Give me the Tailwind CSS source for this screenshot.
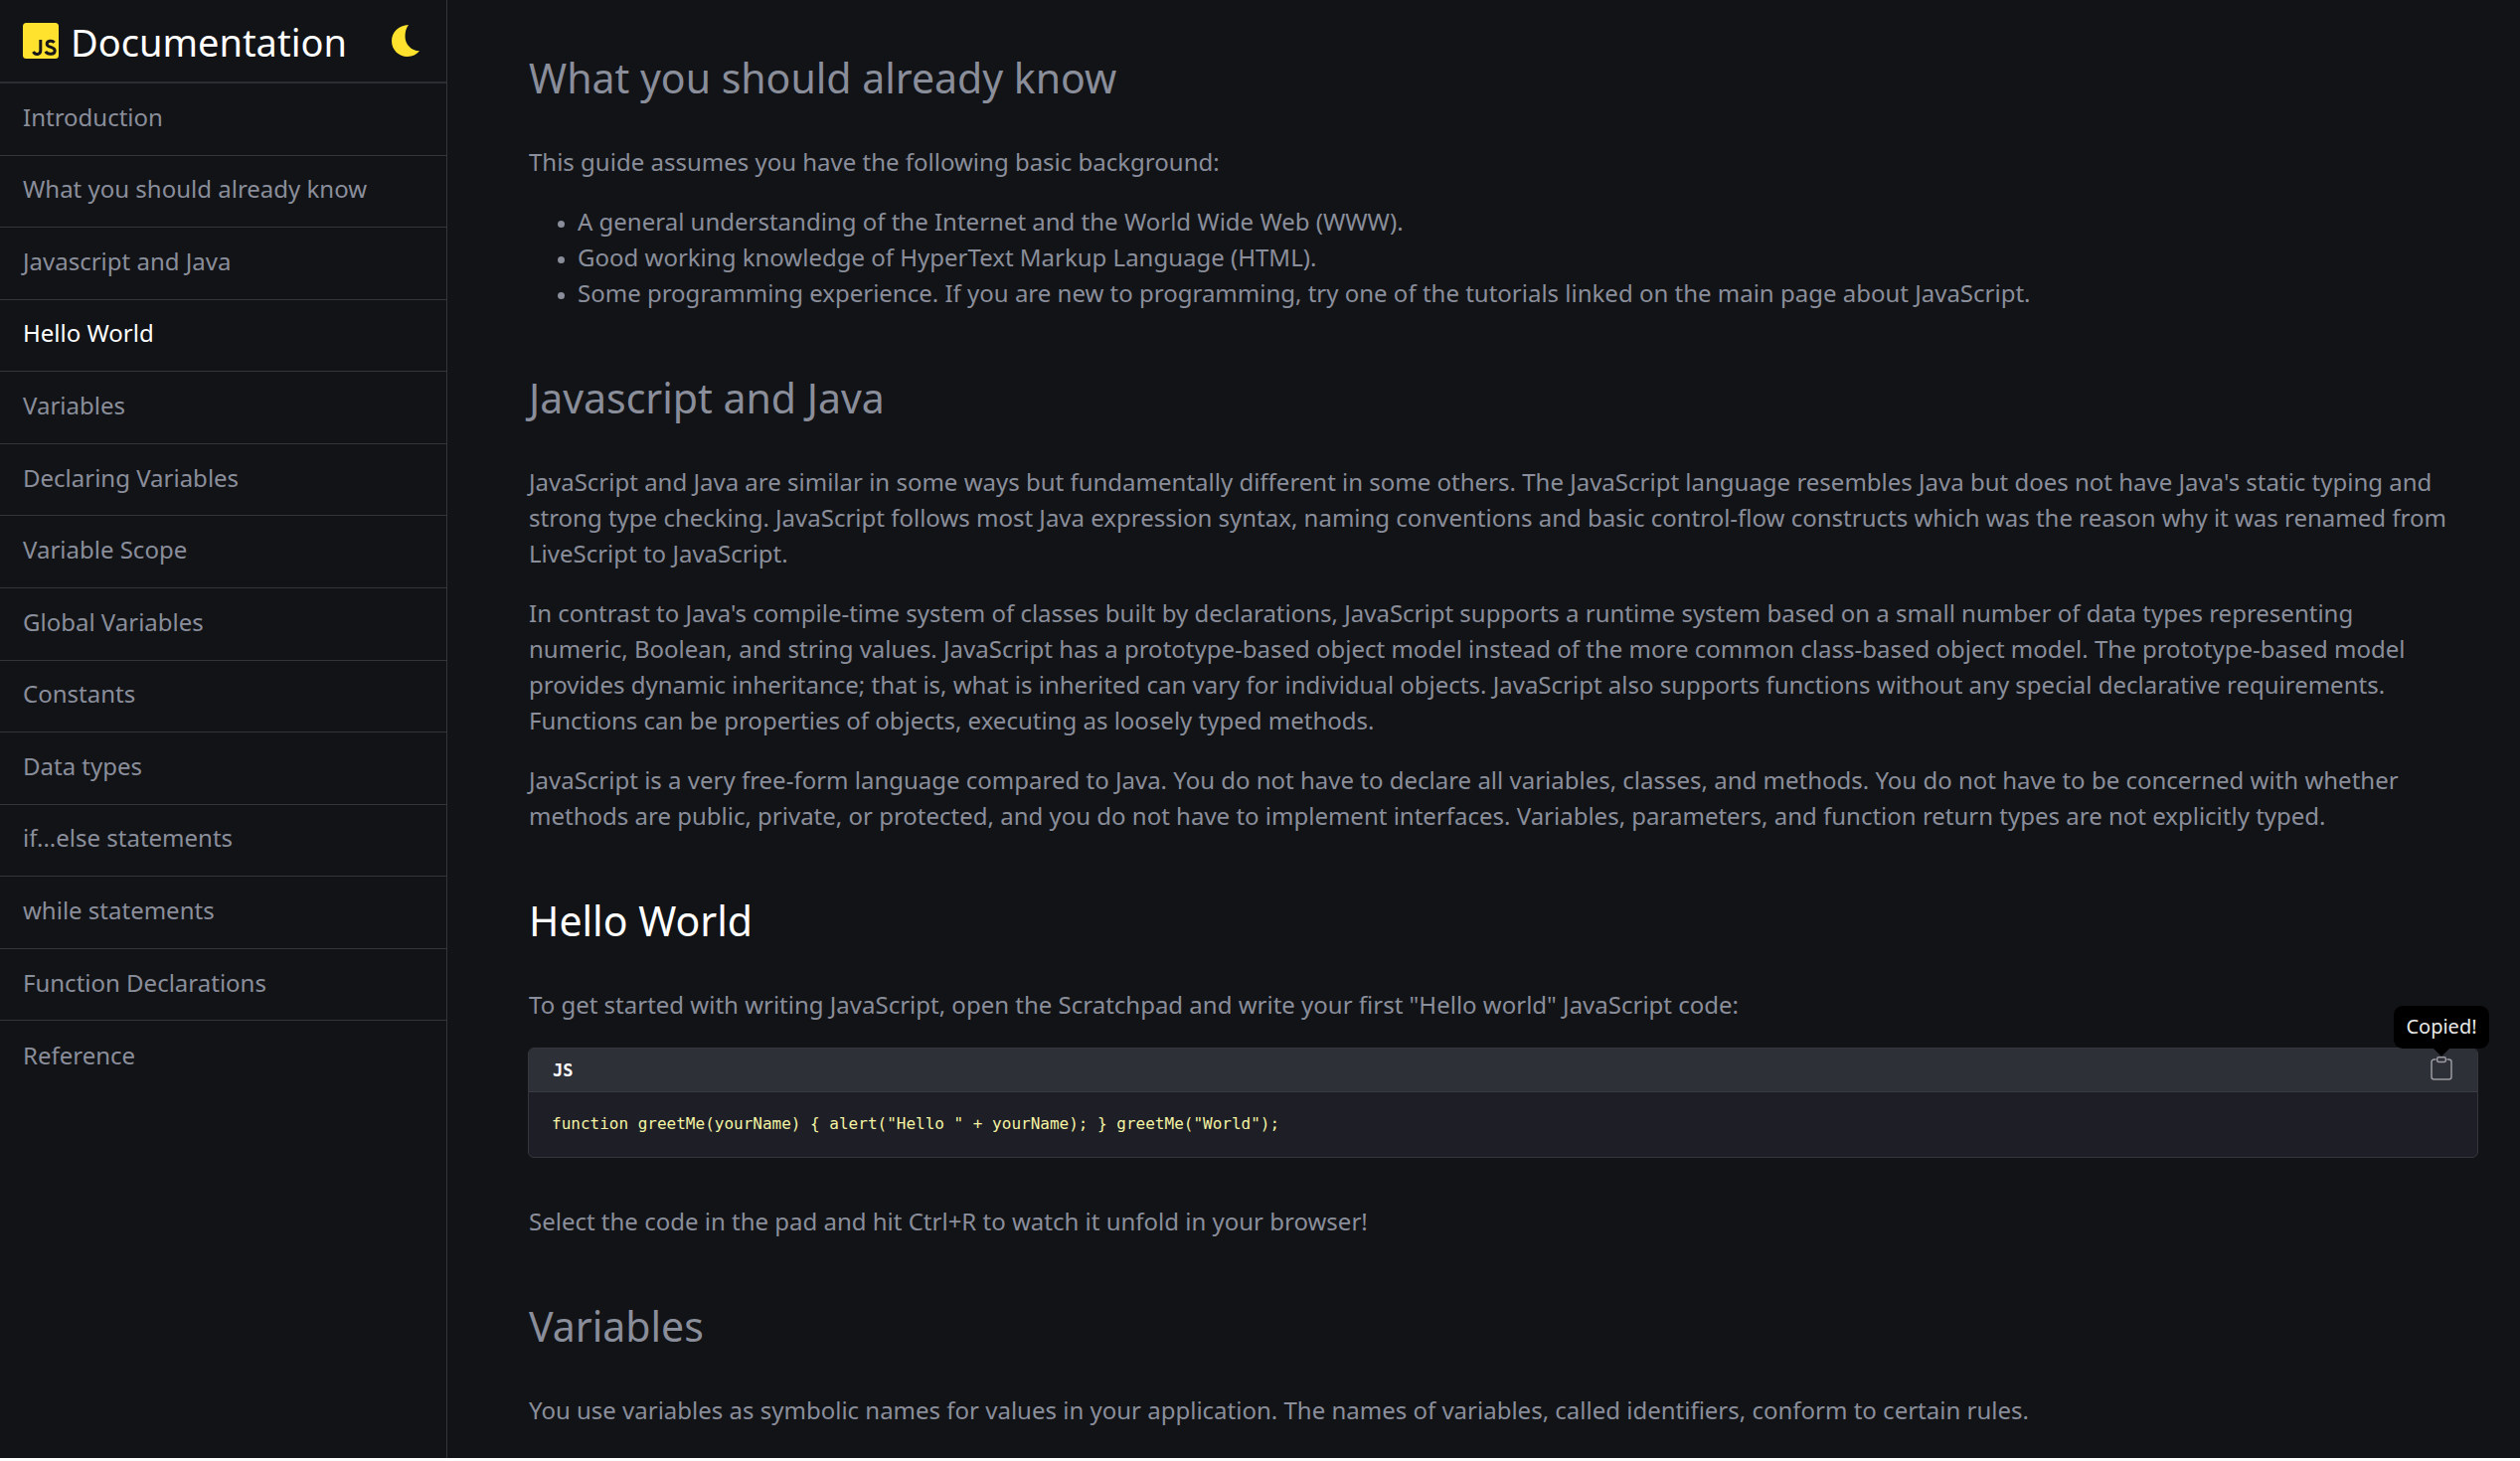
<!DOCTYPE html>
<html lang="en">
<head>
<meta charset="utf-8">
<meta name="viewport" content="width=device-width, initial-scale=1">
<title>JS Documentation</title>
<script src="https://cdn.jsdelivr.net/npm/@tailwindcss/browser@4"></script>
</head>
<body class="flex h-screen overflow-hidden bg-white pb-[3px] font-['Noto_Sans',sans-serif] text-[24px] leading-[36px] text-[#8a8e9b]">

  <!-- Sidebar -->
  <nav class="w-[450px] shrink-0 overflow-hidden border-r border-[#34353b] bg-[#121316]" aria-label="Documentation">
    <header class="flex h-[84px] items-center border-b-2 border-[#2c2d33] pr-[25px] pl-[23px]">
      <svg class="h-9 w-9 shrink-0" viewBox="0 0 36 36" aria-hidden="true">
        <rect width="36" height="36" rx="3.5" fill="#ffe22e"/>
        <path d="M17.800 17v10.800c0 4.200-5.200 5-7.300 1.200" fill="none" stroke="#17171a" stroke-width="3"/>
        <path d="M31.600 19.800c-1.700-2.400-7.400-2.300-7.400 1.400 0 4 8 2.400 8 6.700 0 4.200-7.200 4.500-9.400.9" fill="none" stroke="#17171a" stroke-width="3"/>
      </svg>
      <h1 class="ml-3 pt-0.5 text-[38px] leading-[48px] text-white">Documentation</h1>
      <button type="button" class="ml-auto pr-0.5" aria-label="Toggle dark mode">
        <svg class="h-8 w-7" viewBox="0 0 28 32" aria-hidden="true">
          <path d="M17 0C7 .2 0 7.500 0 16.200 0 25 7 32 15.800 32c5.200 0 9.400-2.200 12.200-5.700-8.400-.3-14.500-6.800-14.500-14.600C13.500 7 14.600 3 17 0Z" fill="#ffe22e"/>
        </svg>
      </button>
    </header>
    <ul class="grid h-[1016px] auto-rows-fr">
      <li class="border-b border-[#34353b]"><a href="#introduction" class="flex h-full items-center pb-1 pl-[23px]">Introduction</a></li>
      <li class="border-b border-[#34353b]"><a href="#know" class="flex h-full items-center pb-1 pl-[23px]">What you should already know</a></li>
      <li class="border-b border-[#34353b]"><a href="#java" class="flex h-full items-center pb-1 pl-[23px]">Javascript and Java</a></li>
      <li class="border-b border-[#34353b]"><a href="#hello" class="flex h-full items-center pb-1 pl-[23px] text-white">Hello World</a></li>
      <li class="border-b border-[#34353b]"><a href="#variables" class="flex h-full items-center pb-1 pl-[23px]">Variables</a></li>
      <li class="border-b border-[#34353b]"><a href="#declaring" class="flex h-full items-center pb-1 pl-[23px]">Declaring Variables</a></li>
      <li class="border-b border-[#34353b]"><a href="#scope" class="flex h-full items-center pb-1 pl-[23px]">Variable Scope</a></li>
      <li class="border-b border-[#34353b]"><a href="#global" class="flex h-full items-center pb-1 pl-[23px]">Global Variables</a></li>
      <li class="border-b border-[#34353b]"><a href="#constants" class="flex h-full items-center pb-1 pl-[23px]">Constants</a></li>
      <li class="border-b border-[#34353b]"><a href="#types" class="flex h-full items-center pb-1 pl-[23px]">Data types</a></li>
      <li class="border-b border-[#34353b]"><a href="#if-else" class="flex h-full items-center pb-1 pl-[23px]">if...else statements</a></li>
      <li class="border-b border-[#34353b]"><a href="#while" class="flex h-full items-center pb-1 pl-[23px]">while statements</a></li>
      <li class="border-b border-[#34353b]"><a href="#functions" class="flex h-full items-center pb-1 pl-[23px]">Function Declarations</a></li>
      <li><a href="#reference" class="flex h-full items-center pb-1 pl-[23px]">Reference</a></li>
    </ul>
  </nav>

  <!-- Content -->
  <main class="min-w-0 flex-1 overflow-hidden bg-[#121316] pt-[53px] pr-[42px] pl-[82px]">
    <section id="know">
      <h2 class="mb-[42px] text-[41px] leading-[50px]">What you should already know</h2>
      <p class="mb-6">This guide assumes you have the following basic background:</p>
      <ul class="pl-[49px]">
        <li class="relative before:absolute before:top-[17px] before:-left-5 before:size-[7px] before:rounded-full before:bg-current">A general understanding of the Internet and the World Wide Web (WWW).</li>
        <li class="relative before:absolute before:top-[17px] before:-left-5 before:size-[7px] before:rounded-full before:bg-current">Good working knowledge of HyperText Markup Language (HTML).</li>
        <li class="relative before:absolute before:top-[17px] before:-left-5 before:size-[7px] before:rounded-full before:bg-current">Some programming experience. If you are new to programming, try one of the tutorials linked on the main page about JavaScript.</li>
      </ul>
    </section>

    <section id="java" class="mt-[62px]">
      <h2 class="mb-[42px] text-[41px] leading-[50px]">Javascript and Java</h2>
      <p class="mb-6">JavaScript and Java are similar in some ways but fundamentally different in some others. The JavaScript language resembles Java but does not have Java's static typing and strong type checking. JavaScript follows most Java expression syntax, naming conventions and basic control-flow constructs which was the reason why it was renamed from LiveScript to JavaScript.</p>
      <p class="mb-6">In contrast to Java's compile-time system of classes built by declarations, JavaScript supports a runtime system based on a small number of data types representing<br> numeric, Boolean, and string values. JavaScript has a prototype-based object model instead of the more common class-based object model. The prototype-based model provides dynamic inheritance; that is, what is inherited can vary for individual objects. JavaScript also supports functions without any special declarative requirements.<br> Functions can be properties of objects, executing as loosely typed methods.</p>
      <p>JavaScript is a very free-form language compared to Java. You do not have to declare all variables, classes, and methods. You do not have to be concerned with whether<br> methods are public, private, or protected, and you do not have to implement interfaces. Variables, parameters, and function return types are not explicitly typed.</p>
    </section>

    <section id="hello" class="mt-[62px]">
      <h2 class="mb-[42px] text-[41px] leading-[50px] text-white">Hello World</h2>
      <p class="mb-[25px]">To get started with writing JavaScript, open the Scratchpad and write your first "Hello world" JavaScript code:</p>
      <div class="mb-[46px] -ml-px rounded-[6px] border border-[#34353d] bg-[#1e1e26]">
        <div class="flex h-[44px] items-center justify-between rounded-t-[5px] border-b border-[#393b43] bg-[#2e3038] px-6">
          <span class="font-['DejaVu_Sans_Mono',monospace] text-[17px] font-bold leading-6 text-white">JS</span>
          <button type="button" class="relative pb-1 text-[#9a9ba0]" aria-label="Copy code">
            <svg class="h-6 w-6" viewBox="0 0 24 24" fill="none" stroke="currentColor" stroke-width="1.500" aria-hidden="true">
              <path d="M6.500 3H4.500A2.500 2.500 0 0 0 2 5.500v15A2.500 2.500 0 0 0 4.500 23h15a2.500 2.500 0 0 0 2.500-2.500v-15A2.500 2.500 0 0 0 19.500 3h-2"/>
              <rect x="7.700" y=".8" width="8.600" height="4.800" rx="1.500"/>
            </svg>
            <span role="tooltip" class="absolute bottom-full left-1/2 mb-2 flex h-[43px] w-24 -translate-x-1/2 items-center justify-center rounded-[9px] bg-black pb-px text-[20px] leading-[30px] text-[#e8e8e8] after:absolute after:top-full after:left-1/2 after:-translate-x-1/2 after:border-x-8 after:border-t-8 after:border-x-transparent after:border-t-black">Copied!</span>
          </button>
        </div>
        <pre class="px-[23px] pt-5 pb-5 text-[16px] leading-6 text-[#f3f3a3]"><code class="font-['DejaVu_Sans_Mono',monospace]">function greetMe(yourName) { alert("Hello " + yourName); } greetMe("World");</code></pre>
      </div>
      <p>Select the code in the pad and hit Ctrl+R to watch it unfold in your browser!</p>
    </section>

    <section id="variables" class="mt-[62px]">
      <h2 class="mb-[42px] text-[41px] leading-[50px]">Variables</h2>
      <p>You use variables as symbolic names for values in your application. The names of variables, called identifiers, conform to certain rules.</p>
    </section>
  </main>
</body>
</html>
